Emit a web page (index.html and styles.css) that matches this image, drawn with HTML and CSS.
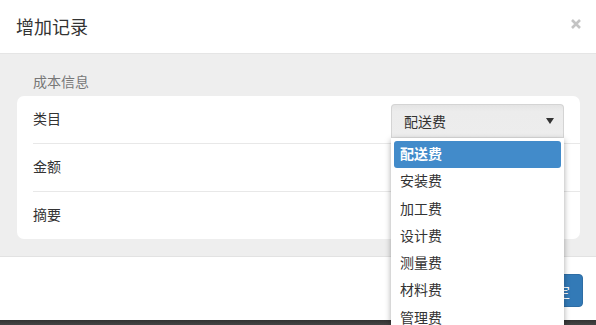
FILE: index.html
```html
<!DOCTYPE html>
<html lang="zh-CN">
<head>
  <meta charset="UTF-8">
  <title>增加记录</title>
  <link rel="stylesheet" href="styles.css">
</head>
<body>

<div class="modal">
  <div class="modal-header">
    <h4 class="modal-title">增加记录</h4>
    <span class="close">
      <svg width="10" height="10" viewBox="0 0 10 10"><path d="M1 1 L9 9 M9 1 L1 9" stroke="#c4c4c4" stroke-width="2.6"/></svg>
    </span>
  </div>

  <div class="modal-body">
    <div class="group-title">成本信息</div>
    <div class="card">
      <div class="row">
        <span class="label">类目</span>
        <div class="select-wrap">
          <div class="select">
            <span>配送费</span>
            <span class="caret"></span>
          </div>
          <!-- open dropdown -->
          <ul class="dropdown">
            <li class="active">配送费</li>
            <li>安装费</li>
            <li>加工费</li>
            <li>设计费</li>
            <li>测量费</li>
            <li>材料费</li>
            <li>管理费</li>
          </ul>
        </div>
      </div>
      <div class="row">
        <span class="label">金额</span>
      </div>
      <div class="row">
        <span class="label">摘要</span>
      </div>
    </div>
  </div>

  <div class="modal-footer">
    <button class="btn-primary">确定</button>
  </div>
</div>
<div class="backdrop"></div>

</body>
</html>
```

FILE: styles.css
```css
body {
  margin: 0;
  font-family: "Liberation Sans", "Noto Sans CJK SC", sans-serif;
  background: #fff;
  color: #333;
  height: 325px;
  overflow: hidden;
}

.modal {
  background: #fff;
}

.modal-header {
  height: 53px;
  border-bottom: 1px solid #e5e5e5;
  display: flex;
  align-items: center;
  justify-content: space-between;
  padding: 0 15px 0 16px;
}

.modal-title {
  margin: 0;
  font-size: 18px;
  font-weight: normal;
  color: #333;
  padding-bottom: 1px;
}

.close {
  display: flex;
  margin-bottom: 6px;
}

.modal-body {
  background: #eee;
  padding: 17px 16px 17px 17px;
  border-bottom: 1px solid #e2e2e2;
}

.group-title {
  font-size: 14px;
  color: #777;
  padding-left: 16px;
  line-height: 20px;
  margin-top: 1px;
  margin-bottom: 4px;
}

.card {
  background: #fff;
  border-radius: 7px;
  padding-left: 16px;
}

.row {
  height: 47px;
  display: flex;
  align-items: center;
  justify-content: space-between;
  border-bottom: 1px solid #e8e8e8;
  padding-right: 16px;
}

.row:last-child {
  border-bottom: none;
}

.label {
  font-size: 14px;
  color: #333;
  margin-top: -4px;
}

.select-wrap {
  position: relative;
  width: 173px;
  align-self: flex-start;
  margin-top: 8px;
}

.select {
  height: 34px;
  box-sizing: border-box;
  border: 1px solid #d4d4d4;
  border-bottom-color: #ddd;
  border-radius: 4px 4px 0 0;
  background: linear-gradient(#e4e4e4, #ececec 20%, #ededed);
  display: flex;
  align-items: center;
  justify-content: space-between;
  padding: 0 9px 0 12px;
  font-size: 14px;
  color: #333;
}

.caret {
  width: 0;
  height: 0;
  border-left: 4px solid transparent;
  border-right: 4px solid transparent;
  border-top: 6px solid #333;
}

.dropdown {
  position: absolute;
  top: 34px;
  left: 0;
  right: 0;
  z-index: 10;
  margin: 0;
  padding: 3px 3px;
  list-style: none;
  background: #fff;
  box-shadow: 0 2px 6px rgba(0,0,0,0.35);
}

.dropdown li {
  height: 27.3px;
  line-height: 27.3px;
  padding-left: 6px;
  font-size: 14px;
  color: #333;
}

.dropdown li.active {
  background: #428bca;
  color: #fff;
  font-weight: bold;
  border-radius: 3px;
}

.modal-footer {
  height: 63px;
  display: flex;
  align-items: center;
  justify-content: flex-end;
  padding-right: 13px;
}

.btn-primary {
  background: #337ab7;
  border: 1px solid #2e6da4;
  color: #fff;
  font-family: "Liberation Sans", "Noto Sans CJK SC", sans-serif;
  font-size: 14px;
  border-radius: 4px;
  height: 33px;
  padding: 0 12px;
  margin-top: 4px;
}

.backdrop {
  height: 10px;
  background: linear-gradient(#333, #555);
}
```
